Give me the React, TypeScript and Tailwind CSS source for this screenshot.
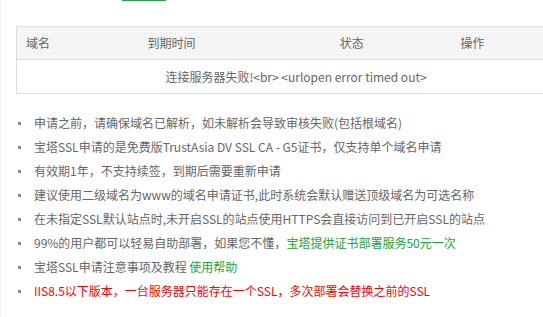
const font = { fontFamily: '"Noto Sans CJK SC", "Liberation Sans", sans-serif' };

const cols = [
  { label: '域名', w: 'w-[122px]' },
  { label: '到期时间', w: 'w-[193px]' },
  { label: '状态', w: 'w-[121px]' },
  { label: '操作', w: 'w-[124px]' },
];

function Item({ children, className = 'text-[#666]' }: { children: React.ReactNode; className?: string }) {
  return (
    <li className={`flex items-center h-6 ${className}`}>
      <span className="w-[3px] h-[3px] bg-[#888] ml-[17px] mr-[13px] shrink-0" />
      <span className="whitespace-nowrap">{children}</span>
    </li>
  );
}

export default function App() {
  return (
    <div className="w-[543px] h-[317px] bg-white overflow-hidden border-l border-[#f2f2f2] text-[12px]" style={font}>
      <div className="ml-[121px] w-[44px] h-px bg-[#20a53a]" />

      <div className="ml-[15px] mt-[25px] w-[560px] border border-[#ddd]">
        <div className="flex h-[33px] items-center bg-[#f5f5f5] border-b border-[#ddd] text-[#666]">
          {cols.map((c) => (
            <div key={c.label} className={`${c.w} pl-[9px]`}>{c.label}</div>
          ))}
        </div>
        <div className="flex h-[33px] items-center justify-center text-[#666] pt-px">
          连接服务器失败!&lt;br&gt; &lt;urlopen error timed out&gt;
        </div>
      </div>

      <ul className="mt-[17px]">
        <Item>申请之前，请确保域名已解析，如未解析会导致审核失败(包括根域名)</Item>
        <Item>宝塔SSL申请的是免费版TrustAsia DV SSL CA - G5证书，仅支持单个域名申请</Item>
        <Item>有效期1年，不支持续签，到期后需要重新申请</Item>
        <Item>建议使用二级域名为www的域名申请证书,此时系统会默认赠送顶级域名为可选名称</Item>
        <Item>在未指定SSL默认站点时,未开启SSL的站点使用HTTPS会直接访问到已开启SSL的站点</Item>
        <Item>
          99%的用户都可以轻易自助部署，如果您不懂，<span className="text-[#20a53a]">宝塔提供证书部署服务50元一次</span>
        </Item>
        <Item>
          宝塔SSL申请注意事项及教程 <span className="text-[#20a53a]">使用帮助</span>
        </Item>
        <Item className="text-[#f00]">IIS8.5以下版本，一台服务器只能存在一个SSL，多次部署会替换之前的SSL</Item>
      </ul>
    </div>
  );
}
